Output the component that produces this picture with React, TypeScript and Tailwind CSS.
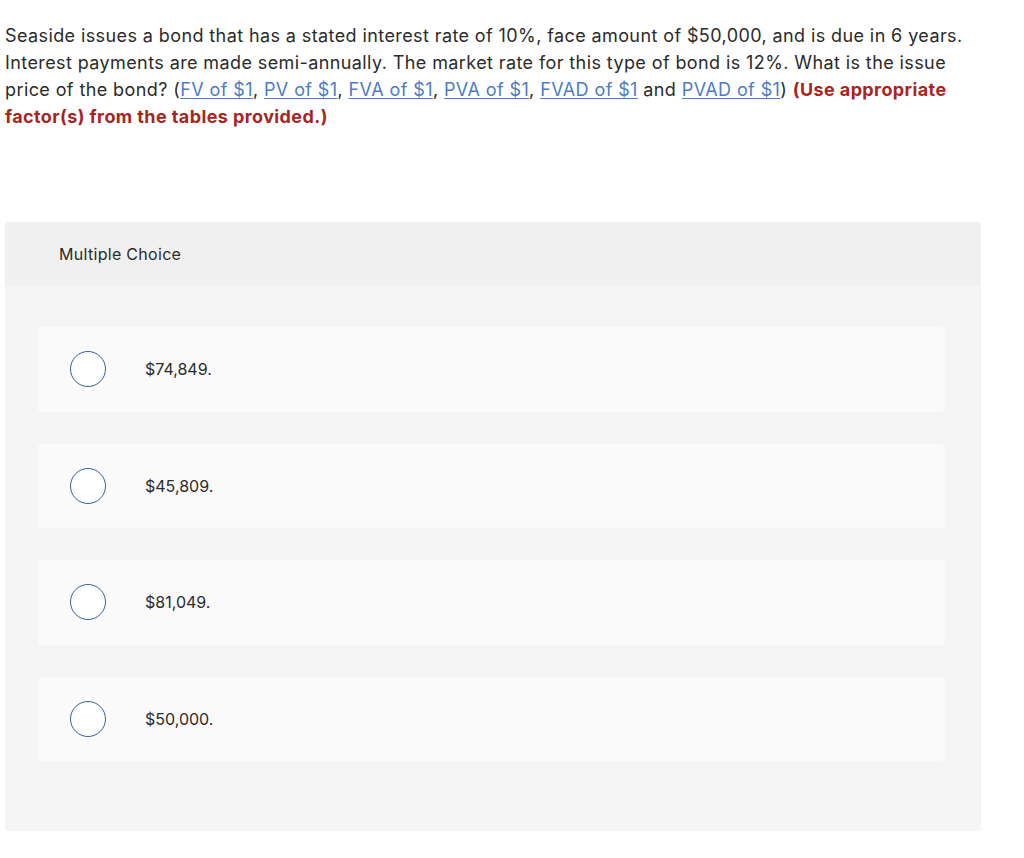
import React from 'react'

const links = ['FV of $1', 'PV of $1', 'FVA of $1', 'PVA of $1', 'FVAD of $1']
const choices = ['$74,849.', '$45,809.', '$81,049.', '$50,000.']

export default function App() {
  return (
    <div className="min-h-[858px] bg-white text-[#2b2b2b]" style={{ fontFamily: 'Inter, sans-serif' }}>
      <p className="pl-[5px] pt-[22px] text-[18px] leading-[27px] tracking-[0.4px] whitespace-nowrap">
        Seaside issues a bond that has a stated interest rate of 10%, face amount of $50,000, and is due in 6 years.
        <br />
        Interest payments are made semi-annually. The market rate for this type of bond is 12%. What is the issue
        <br />
        price of the bond? (
        {links.map((l, i) => (
          <span key={l}>
            <a className="text-[#4c7cc4] underline underline-offset-2">{l}</a>
            {i < links.length - 1 ? ', ' : ''}
          </span>
        ))}{' '}
        and <a className="text-[#4c7cc4] underline underline-offset-2">PVAD of $1</a>){' '}
        <strong className="font-bold text-[#a8251f]">(Use appropriate</strong>
        <br />
        <strong className="font-bold text-[#a8251f]">factor(s) from the tables provided.)</strong>
      </p>

      <div className="ml-[5px] mt-[92px] w-[976px] overflow-hidden rounded-[3px] bg-[#f5f5f5]">
        <div className="flex h-[64px] items-center bg-[#f0f0f0] pl-[54px] text-[16px] tracking-[0.3px]">Multiple Choice</div>
        <div className="flex flex-col gap-[32px] pl-[33px] pr-[36px] pb-[70px] pt-[41px]">
          {choices.map(c => (
            <div key={c} className="flex h-[84.5px] items-center rounded-[4px] bg-[#fafafa] pl-[32px]">
              <span className="h-[36px] w-[36px] rounded-full border-[1.5px] border-[#34609a] bg-white" />
              <span className="ml-[39px] text-[16px]">{c}</span>
            </div>
          ))}
        </div>
      </div>
    </div>
  )
}
